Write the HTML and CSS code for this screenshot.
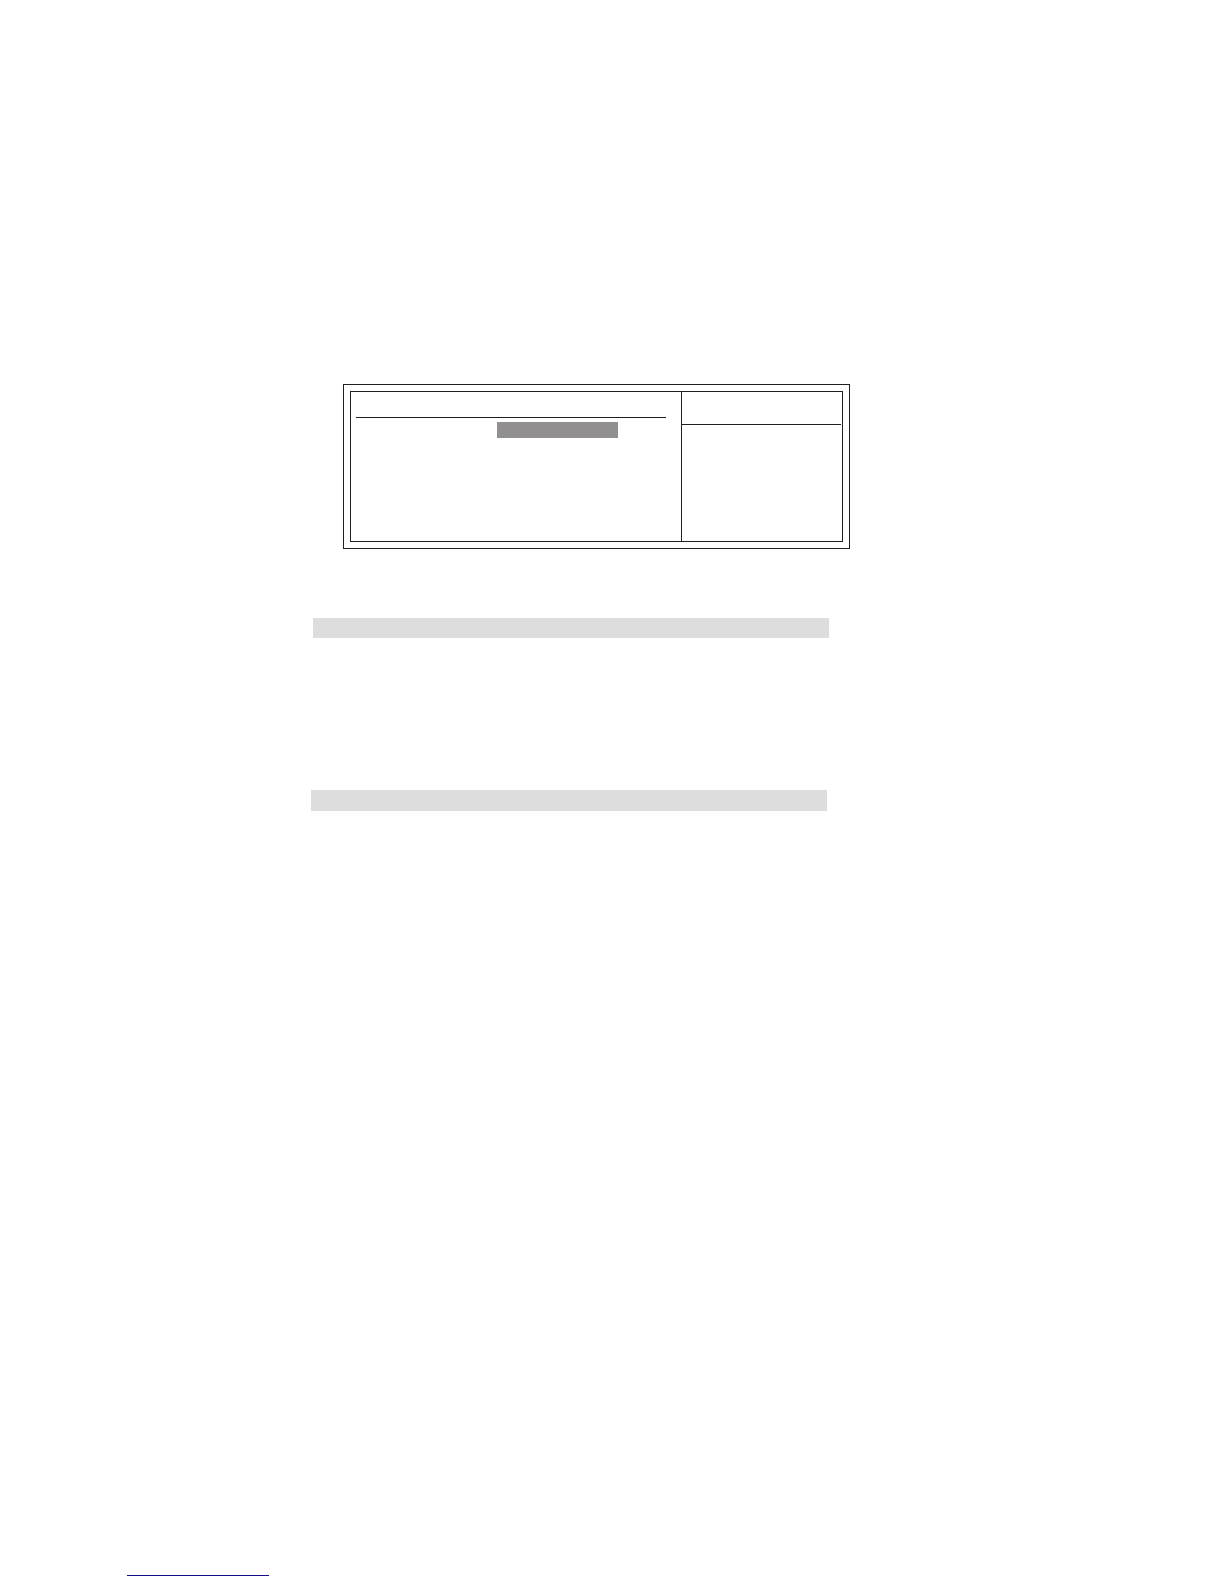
FILE: index.html
```html
<!DOCTYPE html>
<html lang="en">
  <head>
    <meta charset="UTF-8" />
    <meta name="viewport" content="width=device-width, initial-scale=1.0" />
    <title>Setup Menu</title>
    <link rel="stylesheet" href="styles.css">
  </head>
  <body>
    <main class="content">
      <div class="menu-frame">
        <div class="menu">
          <div class="menu-items">
            <div class="menu-title"></div>
            <div class="menu-selected"></div>
          </div>
          <div class="menu-help">
            <div class="help-title"></div>
          </div>
        </div>
      </div>
      <div class="bar bar-first"></div>
      <div class="bar bar-second"></div>
    </main>
    <footer class="footer">
      <div class="footer-line"></div>
    </footer>
  </body>
</html>
```

FILE: styles.css
```css
* {
  box-sizing: border-box;
}

body {
  font-family: "Liberation Sans", Arial, sans-serif;
  background-color: white;
  display: flex;
  flex-direction: column;
  min-height: 100vh;
  margin: 0;
}

.content {
  padding: 384px 32px 32px 311px;
}

/* double outline around the menu */
.menu-frame {
  max-width: 507px;
  margin-left: 32px;
  padding: 6px;
  border: 1px solid #231f20;
}

.menu {
  display: grid;
  grid-template-columns: 331fr 160fr;
  min-height: 151px;
  border: 1px solid #231f20;
}

.menu-items {
  padding: 0 15px 0 5px;
  border-right: 1px solid #231f20;
}

.menu-title {
  height: 26px;
  margin-bottom: 4px;
  border-bottom: 1px solid #231f20;
}

.menu-selected {
  width: 121px;
  height: 16px;
  margin-left: 141px;
  background-color: #918f90;
}

.menu-help {
  padding-right: 1px;
}

.help-title {
  height: 33px;
  border-bottom: 1px solid #231f20;
}

.bar {
  max-width: 516px;
  background-color: #dddddd;
}

.bar-first {
  height: 20px;
  margin-top: 69px;
  margin-left: 2px;
}

.bar-second {
  height: 21px;
  margin-top: 152px;
}

.footer {
  margin-top: auto;
  padding: 0 32px 8px 127px;
}

.footer-line {
  max-width: 142px;
  border-bottom: 1px solid #150c8c;
}
```
